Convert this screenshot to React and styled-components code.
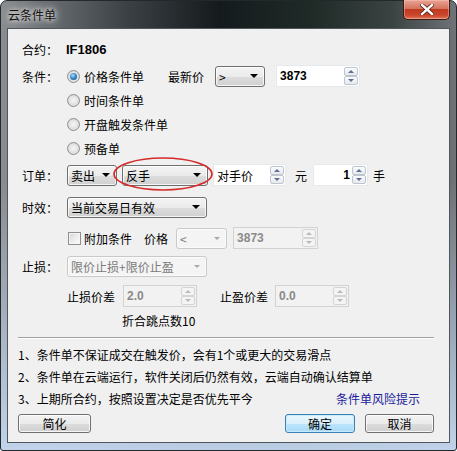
import React from 'react';
import styled, { createGlobalStyle, css } from 'styled-components';

const GlobalStyle = createGlobalStyle`
  html, body { margin: 0; padding: 0; background: #ffffff; }
  body {
    font-family: "Noto Sans CJK SC", "Liberation Sans", sans-serif;
    font-size: 12px;
    color: #000;
  }
`;

const Window = styled.div`
  position: relative;
  width: 457px;
  height: 451px;
  box-sizing: border-box;
  display: flex;
  flex-direction: column;
  border: 1px solid #24282b;
  border-radius: 7px 7px 3px 3px;
  padding: 0 6px 7px 6px;
  background:
    linear-gradient(to bottom, rgba(190, 212, 238, 0) 0%, rgba(190, 212, 238, 0) 40%, rgba(196, 216, 240, 0.95) 100%),
    linear-gradient(to right, #8a8d91 0%, #6a6e72 10%, #3a4043 28%, #151b1d 48%, #1f2a27 68%, #3a4342 86%, #707478 100%);
`;

const TitleBar = styled.div`
  height: 27px;
  display: flex;
  align-items: center;
  flex-shrink: 0;
`;

const Title = styled.span`
  margin-left: 1px;
  font-size: 12px;
  color: #111;
  text-shadow: 0 0 4px #e6e6e6, 0 0 8px #d0d0d0, 0 0 10px #c8c8c8;
`;

const CloseButton = styled.div`
  margin-left: auto;
  align-self: flex-start;
  margin-top: -1px;
  width: 47px;
  height: 20px;
  box-sizing: border-box;
  border: 1px solid #3d1a14;
  border-top: none;
  border-radius: 0 0 5px 5px;
  background: linear-gradient(#e8a493 0%, #d4745e 45%, #c03a22 50%, #c9462c 80%, #e0785a 100%);
  box-shadow: inset 0 0 0 1px rgba(255, 200, 190, 0.45);
  display: flex;
  align-items: center;
  justify-content: center;
`;

const Client = styled.div`
  flex: 1;
  box-sizing: border-box;
  border: 1px solid #50575c;
  background: #f0f0f0;
  padding: 8px 15px 0 10px;
  display: flex;
  flex-direction: column;
`;

const Row = styled.div`
  position: relative;
  display: flex;
  align-items: center;
  height: ${p => p.$h || 24}px;
  margin-top: ${p => p.$mt || 0}px;
  padding-left: ${p => p.$indent || 0}px;
  flex-shrink: 0;
`;

const Label = styled.span`
  width: 49px;
  padding-left: 4px;
  box-sizing: border-box;
  flex-shrink: 0;
`;

const Text = styled.span`
  margin-left: ${p => p.$ml || 0}px;
  color: ${p => p.$color || 'inherit'};
  white-space: nowrap;
`;

const Contract = styled.span`
  margin-left: -1px;
  font-family: "Liberation Sans", Arial, sans-serif;
  font-weight: bold;
  font-size: 13px;
`;

const RadioCircle = styled.span`
  position: relative;
  width: 13px;
  height: 13px;
  box-sizing: border-box;
  border-radius: 50%;
  border: 1px solid #8e8f8f;
  background: radial-gradient(circle at 50% 50%, #f6f6f6 0%, #e2e2e2 55%, #c6c6c6 100%);
  flex-shrink: 0;
  ${p => p.$checked && css`
    &::after {
      content: '';
      position: absolute;
      left: 2px;
      top: 2px;
      width: 7px;
      height: 7px;
      border-radius: 50%;
      background: radial-gradient(circle at 40% 35%, #a8dbf8 0%, #2a7fc4 55%, #0e4c8a 100%);
    }
  `}
`;

const CheckBox = styled.span`
  width: 13px;
  height: 13px;
  box-sizing: border-box;
  margin-left: 1px;
  border: 1px solid #8f8f8f;
  background: linear-gradient(135deg, #d6d6d6 0%, #f0f0f0 60%, #fdfdfd 100%);
  box-shadow: inset 0 0 0 1px #f4f4f4;
  flex-shrink: 0;
`;

const ComboBox = styled.div`
  width: ${p => p.$w}px;
  height: 21px;
  margin-left: ${p => p.$ml || 0}px;
  box-sizing: border-box;
  border: 1px solid ${p => (p.$disabled ? '#c9c9c9' : '#707070')};
  border-radius: 3px;
  padding: 0 6px 0 3px;
  display: flex;
  align-items: center;
  flex-shrink: 0;
  color: ${p => (p.$disabled ? '#7a7a7a' : '#000')};
  background: ${p =>
    p.$disabled
      ? '#f4f4f4'
      : 'linear-gradient(#f3f3f3 0%, #ebebeb 50%, #dddddd 51%, #d0d0d0 100%)'};
  box-shadow: inset 0 0 0 1px ${p => (p.$disabled ? '#fbfbfb' : 'rgba(255,255,255,0.75)')};
`;

const ComboText = styled.span`
  flex: 1;
  white-space: nowrap;
  overflow: hidden;
`;

const DownArrow = styled.span`
  width: 0;
  height: 0;
  border-left: 4px solid transparent;
  border-right: 4px solid transparent;
  border-top: 4px solid ${p => (p.$disabled ? '#a8a8a8' : '#000')};
  ${p => p.$disabled && css`
    border-left-width: 3px;
    border-right-width: 3px;
    border-top-width: 3px;
  `}
`;

const SpinBox = styled.div`
  width: ${p => p.$w}px;
  height: 22px;
  margin-left: ${p => p.$ml || 0}px;
  box-sizing: border-box;
  display: flex;
  flex-shrink: 0;
  border: 1px solid ${p => (p.$disabled ? '#d2d2d2' : '#e6e9ee')};
  background: ${p => (p.$disabled ? '#f2f2f2' : '#ffffff')};
`;

const SpinValue = styled.span`
  flex: 1;
  display: flex;
  align-items: center;
  justify-content: ${p => (p.$right ? 'flex-end' : 'flex-start')};
  padding: 0 ${p => (p.$right ? 2 : 3)}px;
  color: ${p => (p.$disabled ? '#8a8a8a' : '#000')};
  ${p => p.$num && css`
    font-family: "Liberation Sans", Arial, sans-serif;
    font-weight: bold;
    font-size: 12px;
  `}
`;

const SpinButtons = styled.div`
  width: 14px;
  display: flex;
  flex-direction: column;
  padding: 1px 1px 1px 0;
`;

const SpinButton = styled.div`
  flex: 1;
  box-sizing: border-box;
  border: 1px solid ${p => (p.$disabled ? '#d4d4d4' : '#bfc5ce')};
  border-radius: 2px;
  background: ${p => (p.$disabled ? '#f4f4f4' : 'linear-gradient(#fbfbfc, #e6e9ee)')};
  display: flex;
  align-items: center;
  justify-content: center;
`;

const SpinArrow = styled.span`
  width: 0;
  height: 0;
  border-left: 3px solid transparent;
  border-right: 3px solid transparent;
  ${p => (p.$up ? 'border-bottom' : 'border-top')}: 3px solid ${p => (p.$disabled ? '#b8b8b8' : '#5d6f93')};
`;

const Separator = styled.div`
  margin-top: ${p => p.$mt || 0}px;
  height: 0;
  border-top: 1px solid #a0a0a0;
  border-bottom: 1px solid #ffffff;
  flex-shrink: 0;
`;

const Link = styled.span`
  margin-left: auto;
  margin-right: 14px;
  color: #1a1a9c;
`;

const Button = styled.div`
  width: ${p => p.$w}px;
  height: 19px;
  margin-left: ${p => p.$ml || 0}px;
  box-sizing: border-box;
  border: 1px solid ${p => (p.$primary ? '#3c7fb1' : '#707070')};
  border-radius: 3px;
  display: flex;
  align-items: center;
  justify-content: center;
  flex-shrink: 0;
  background: ${p =>
    p.$primary
      ? 'linear-gradient(#eaf6fd 0%, #d9f0fc 50%, #bee6fd 51%, #a7d9f5 100%)'
      : 'linear-gradient(#f2f2f2 0%, #ebebeb 50%, #dddddd 51%, #cfcfcf 100%)'};
  box-shadow: inset 0 0 0 1px ${p => (p.$primary ? 'rgba(200,235,255,0.9)' : 'rgba(255,255,255,0.8)')};
`;

const Ellipse = styled.svg`
  position: absolute;
  left: 93px;
  top: -8px;
  width: 104px;
  height: 38px;
  overflow: visible;
  pointer-events: none;
`;

const Combo = ({ w, ml, text, disabled }) => (
  <ComboBox $w={w} $ml={ml} $disabled={disabled}>
    <ComboText>{text}</ComboText>
    <DownArrow $disabled={disabled} />
  </ComboBox>
);

const Spin = ({ w, ml, value, num, right, disabled }) => (
  <SpinBox $w={w} $ml={ml} $disabled={disabled}>
    <SpinValue $num={num} $right={right} $disabled={disabled}>{value}</SpinValue>
    <SpinButtons>
      <SpinButton $disabled={disabled}><SpinArrow $up $disabled={disabled} /></SpinButton>
      <SpinButton $disabled={disabled}><SpinArrow $disabled={disabled} /></SpinButton>
    </SpinButtons>
  </SpinBox>
);

const App = () => (
  <>
    <GlobalStyle />
    <Window>
      <TitleBar>
        <Title>云条件单</Title>
        <CloseButton>
          <svg width="14" height="11" viewBox="0 0 14 11">
            <path d="M2 1 L12 10 M12 1 L2 10" stroke="#5a1c12" strokeWidth="4" strokeLinecap="square" />
            <path d="M2 1 L12 10 M12 1 L2 10" stroke="#ffffff" strokeWidth="2.4" strokeLinecap="square" />
          </svg>
        </CloseButton>
      </TitleBar>
      <Client>
        <Row>
          <Label>合约：</Label>
          <Contract>IF1806</Contract>
        </Row>
        <Row $mt={3}>
          <Label>条件：</Label>
          <RadioCircle $checked />
          <Text $ml={4}>价格条件单</Text>
          <Text $ml={24}>最新价</Text>
          <Combo w={50} ml={11} text=">" />
          <Spin w={84} ml={11} value="3873" num />
        </Row>
        <Row $indent={49}>
          <RadioCircle />
          <Text $ml={4}>时间条件单</Text>
        </Row>
        <Row $indent={49}>
          <RadioCircle />
          <Text $ml={4}>开盘触发条件单</Text>
        </Row>
        <Row $indent={49}>
          <RadioCircle />
          <Text $ml={4}>预备单</Text>
        </Row>
        <Row $mt={3}>
          <Label>订单：</Label>
          <Combo w={50} text="卖出" />
          <Combo w={86} ml={5} text="反手" />
          <Spin w={73} ml={5} value="对手价" />
          <Text $ml={9}>元</Text>
          <Spin w={55} ml={6} value="1" num right />
          <Text $ml={5}>手</Text>
          <Ellipse viewBox="0 0 104 38">
            <ellipse cx="52" cy="19" rx="49" ry="16" fill="none" stroke="#d42a2a" strokeWidth="1.6" />
          </Ellipse>
        </Row>
        <Row $mt={8}>
          <Label>时效：</Label>
          <Combo w={140} text="当前交易日有效" />
        </Row>
        <Row $mt={7} $indent={49}>
          <CheckBox />
          <Text $ml={3}>附加条件</Text>
          <Text $ml={12}>价格</Text>
          <Combo w={51} ml={8} text="<" disabled />
          <Spin w={85} ml={6} value="3873" num disabled />
        </Row>
        <Row $mt={4}>
          <Label>止损：</Label>
          <Combo w={140} text="限价止损+限价止盈" disabled />
        </Row>
        <Row $mt={6} $indent={49}>
          <Text>止损价差</Text>
          <Spin w={74} ml={8} value="2.0" num disabled />
          <Text $ml={23}>止盈价差</Text>
          <Spin w={74} ml={7} value="0.0" num disabled />
        </Row>
        <Row $mt={4} $h={16} $indent={104}>
          <Text>折合跳点数10</Text>
        </Row>
        <Separator $mt={9} />
        <Row $mt={4} $h={22}>
          <Text>1、条件单不保证成交在触发价，会有1个或更大的交易滑点</Text>
        </Row>
        <Row $h={22}>
          <Text>2、条件单在云端运行，软件关闭后仍然有效，云端自动确认结算单</Text>
        </Row>
        <Row $h={22}>
          <Text>3、上期所合约，按照设置决定是否优先平今</Text>
          <Link>条件单风险提示</Link>
        </Row>
        <Row $mt={5} $h={19}>
          <Button $w={73}>简化</Button>
          <Button $w={70} $ml={194} $primary>确定</Button>
          <Button $w={69} $ml={10}>取消</Button>
        </Row>
      </Client>
    </Window>
  </>
);

export default App;
